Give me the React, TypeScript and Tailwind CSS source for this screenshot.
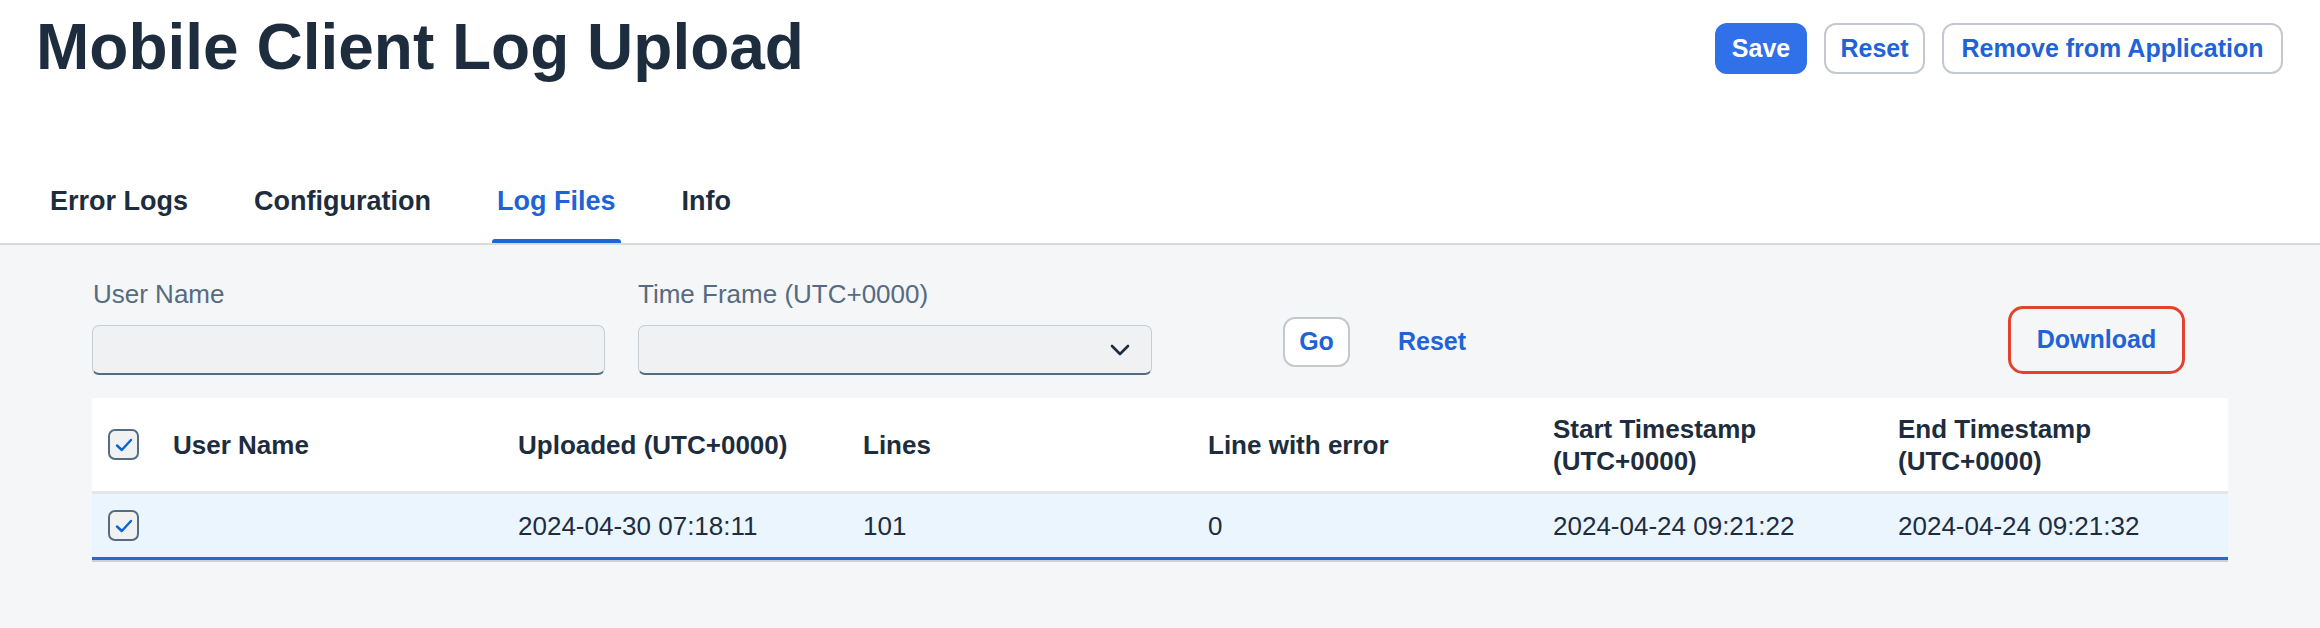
import React from "react";

const Check = () => (
  <div className="w-[31px] h-[31px] rounded-[7px] border-2 border-[#556b82] bg-[#eff1f2] flex items-center justify-center">
    <svg width="18" height="14" viewBox="0 0 18 14" fill="none">
      <path d="M2 7.5 L6.8 12 L16 2" stroke="#0a64d8" strokeWidth="2.4" strokeLinecap="round" strokeLinejoin="round" />
    </svg>
  </div>
);

export default function App() {
  const tabs = ["Error Logs", "Configuration", "Log Files", "Info"];
  return (
    <div className="w-full min-h-[628px] bg-[#f5f6f7] font-['Liberation_Sans',Arial,sans-serif] text-[#1d2d3e]">
      {/* Header */}
      <div className="bg-white border-b-2 border-[#d9d9d9]">
        <div className="flex items-start justify-between pl-[36px] pr-[37px] pt-[15px]">
          <h1 className="text-[64px] leading-[64px] font-bold text-[#1d2d3e]">Mobile Client Log Upload</h1>
          <div className="flex gap-[17px] pt-[8px]">
            <button className="h-[51px] w-[92px] rounded-[12px] bg-[#3070e8] text-white text-[25px] font-bold">Save</button>
            <button className="h-[51px] w-[101px] rounded-[12px] bg-white border-2 border-[#c4c9d0] text-[#1f63d6] text-[25px] font-bold">Reset</button>
            <button className="h-[51px] w-[341px] rounded-[12px] bg-white border-2 border-[#c4c9d0] text-[#1f63d6] text-[25px] font-bold">Remove from Application</button>
          </div>
        </div>
        <div className="flex gap-[56px] pl-[45px] mt-[106px]">
          {tabs.map((t) => {
            const active = t === "Log Files";
            return (
              <div key={t} className="relative px-[5px] pb-[26px]">
                <span className={`block text-[27px] leading-[32px] font-bold ${active ? "text-[#1f63d6]" : "text-[#1d2d3e]"}`}>{t}</span>
                {active && <div className="absolute left-0 right-0 bottom-0 h-[4px] rounded-t-[3px] bg-[#1f63d6]" />}
              </div>
            );
          })}
        </div>
      </div>

      {/* Body */}
      <div className="px-[92px] pt-[33px]">
        <div className="flex items-start">
          <div className="w-[513px]">
            <div className="text-[26px] leading-[32px] text-[#556b82] pl-[1px]">User Name</div>
            <div className="mt-[15px] h-[50px] rounded-[7px] bg-[#eff1f2] border border-[#c6cdd3] border-b-2 border-b-[#556b82]" />
          </div>
          <div className="w-[514px] ml-[33px]">
            <div className="text-[26px] leading-[32px] text-[#556b82]">Time Frame (UTC+0000)</div>
            <div className="mt-[15px] h-[50px] rounded-[7px] bg-[#eff1f2] border border-[#c6cdd3] border-b-2 border-b-[#556b82] flex items-center justify-end pr-[21px]">
              <svg width="20" height="12" viewBox="0 0 20 12" fill="none">
                <path d="M2 2 L10 10 L18 2" stroke="#1d2d3e" strokeWidth="2.6" strokeLinecap="round" strokeLinejoin="round" />
              </svg>
            </div>
          </div>
          <div className="ml-[131px] mt-[39px] flex items-center">
            <button className="h-[50px] w-[67px] rounded-[12px] bg-white border-2 border-[#c4c9d0] text-[#1f63d6] text-[25px] font-bold">Go</button>
            <button className="ml-[48px] text-[#1f63d6] text-[25px] font-bold">Reset</button>
          </div>
          <div className="ml-auto mr-[43px] mt-[28px] h-[68px] w-[177px] rounded-[15px] border-[3px] border-[#e4432b] flex items-center justify-center">
            <span className="text-[#1f63d6] text-[25px] font-bold">Download</span>
          </div>
        </div>

        {/* Table */}
        <div className="mt-[23px] bg-white">
          <div className="grid grid-cols-[81px_345px_345px_345px_345px_345px_1fr] h-[96px] items-center border-b-[3px] border-[#e5e5e5] text-[26px] leading-[32px] font-bold text-[#1d2d3e]">
            <div className="pl-[16px]"><Check /></div>
            <div>User Name</div>
            <div>Uploaded (UTC+0000)</div>
            <div>Lines</div>
            <div>Line with error</div>
            <div>Start Timestamp<br />(UTC+0000)</div>
            <div>End Timestamp<br />(UTC+0000)</div>
          </div>
          <div className="grid grid-cols-[81px_345px_345px_345px_345px_345px_1fr] h-[66px] items-center bg-[#ebf5fe] border-b-[3px] border-[#2666d8] text-[26px] leading-[32px] text-[#1d2d3e]">
            <div className="pl-[16px]"><Check /></div>
            <div></div>
            <div>2024-04-30 07:18:11</div>
            <div>101</div>
            <div>0</div>
            <div>2024-04-24 09:21:22</div>
            <div>2024-04-24 09:21:32</div>
          </div>
        </div>
        <div className="h-[2px] bg-[#cdd1d5]" />
      </div>
    </div>
  );
}
